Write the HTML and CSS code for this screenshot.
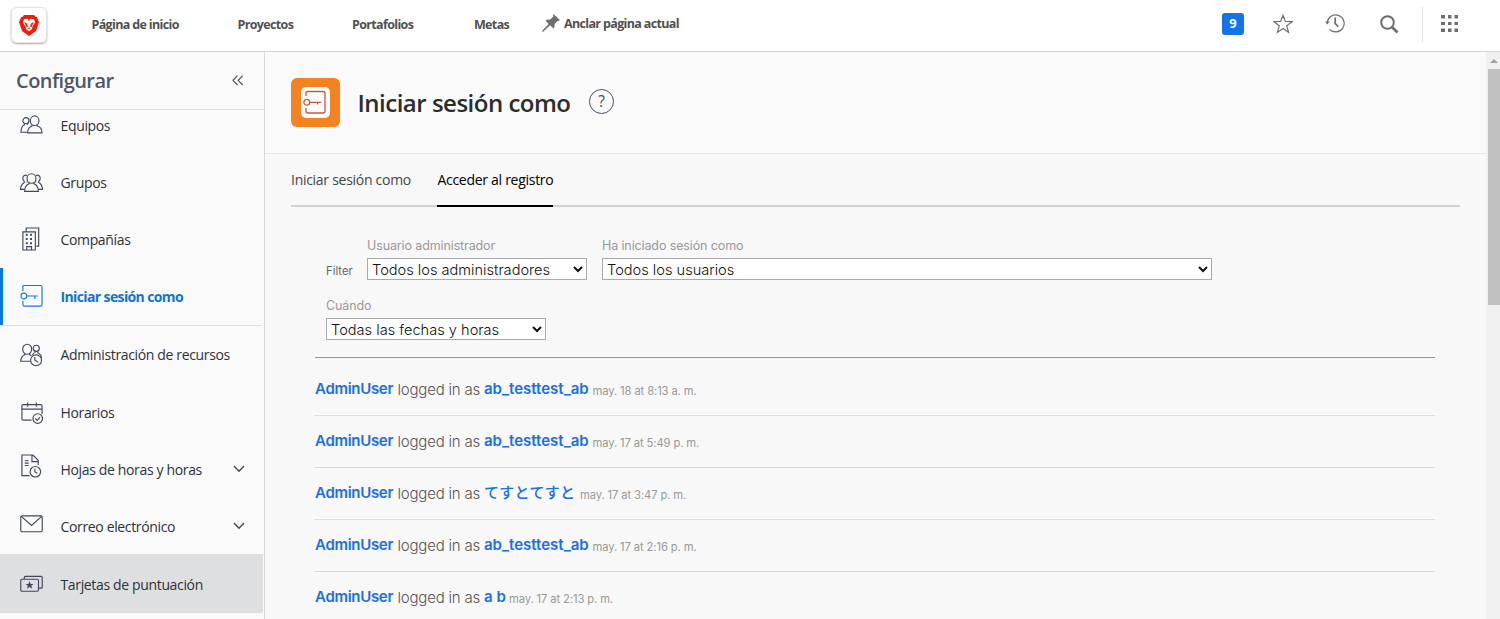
FILE: index.html
```html
<!DOCTYPE html>
<html lang="es">
<head>
<meta charset="utf-8">
<title>Iniciar sesión como</title>
<link rel="stylesheet" href="styles.css">
</head>
<body>
<header class="topbar">
  <div class="logo">
    <svg width="20" height="21" viewBox="0 0 20 21"><path fill="#f01d0c" d="M5 0h10l1.500 2 1.200-.3L20 7l-1 3-2 6-7 5-7-5-2-6-1-3L2.300 1.700 3.500 2z"/><path fill="#fff" d="M5 4.300l3-.6 2 .6 2-.6 3 .6 1 3-1.200 2.500-1.300 1.500-.5 2.700L10 16.300 7 14l-.5-2.700-1.300-1.500L4 7.300z"/><path fill="#f01d0c" d="M5.300 6.800l2.900 1.900.6 3-1 .8L6.500 10zM14.700 6.800l-2.900 1.900-.6 3 1 .8 1.300-2.500zM8.600 13.200l1.400-.6 1.400.6-1.400 1.100zM9 4h2l-1 2.500z"/></svg>
  </div>
  <nav class="nav">
    <a class="nav-home">Página de inicio</a>
    <a class="nav-projects">Proyectos</a>
    <a class="nav-portfolios">Portafolios</a>
    <a class="nav-goals">Metas</a>
    <a class="nav-pin"><svg width="18" height="18" viewBox="0 0 18 18" fill="#6e6e6e"><path d="M11.500 0L18 6.300l-1.700.7-.6-.3-3.300 3.500c.5 1.500.2 3-1 4.200L8 11.200 1.200 17.800H.2v-1L6.600 10 3.600 6.800c1.200-1.200 2.800-1.500 4.300-1L11.400 2.400l-.4-.8z"/></svg><span>Anclar página actual</span></a>
  </nav>
  <div class="tools">
    <span class="badge">9</span>
    <svg class="tool-star" width="20" height="20" viewBox="0 0 20 20" fill="none" stroke="#6e6e6e" stroke-width="1.200"><path d="M10 1.200l2.300 6.200 6.800.2-5.400 4.200 1.900 6.600-5.600-3.800-5.600 3.800 1.900-6.600L.9 7.600l6.800-.2z"/></svg>
    <svg class="tool-history" width="20" height="19" viewBox="0 0 20 19" fill="none" stroke="#6e6e6e" stroke-width="1.200"><path d="M2.200 8.500a8.500 8.500 0 1 1 2.300 6.800"/><path d="M10.200 3.500v6l3 3.200" stroke-width="1.800"/><path d="M0 7.500h4.700L2.300 10.500z" fill="#6e6e6e" stroke="none"/></svg>
    <svg class="tool-search" width="19" height="19" viewBox="0 0 19 19" fill="none" stroke="#6e6e6e"><circle cx="7.500" cy="7.500" r="6.300" stroke-width="2"/><path d="M12 12l5.500 5.500" stroke-width="2.600"/></svg>
    <i class="tool-divider"></i>
    <svg class="tool-apps" width="18" height="18" viewBox="0 0 18 18" fill="#6e6e6e"><path d="M0 1h4v3.500H0zM7 1h3.500v3.500H7zM13.500 1h3.500v3.500h-3.500zM0 8h4v3H0zM7 8h3.500v3H7zM13.500 8h3.500v3h-3.500zM0 14.500h4V18H0zM7 14.500h3.500V18H7zM13.500 14.500h3.500V18h-3.500z"/></svg>
  </div>
</header>
<div class="body">
  <aside class="sidebar">
    <div class="side-head"><h2>Configurar</h2><svg width="12" height="11" viewBox="0 0 12 11" fill="none" stroke="#4b5563" stroke-width="1.200"><path d="M5.500.6L1 5.300 5.500 10M10.700.6L6.200 5.300l4.500 4.700"/></svg></div>
    <div class="side-scroll">
      <ul class="side-list">
        <li class="item"><svg class="icon" viewBox="0 0 24 24"><circle cx="6.200" cy="6.500" r="3.200"/><ellipse cx="15.300" cy="6.500" rx="4.500" ry="5"/><path d="M4.500 9.500v1.500C2 12 1 14.500 1 18.500h7M7.800 9.500v1.200M12.500 10.500v1.500C9.500 13 8 15.500 8 19.200h15c0-3.700-1.500-6.200-5-7.200v-1.500"/></svg><span>Equipos</span></li>
        <li class="item"><svg class="icon" viewBox="0 0 24 24"><ellipse cx="12" cy="7.300" rx="4.700" ry="5"/><path d="M9.500 11.500v1.300c-3 1-4.500 3.800-4.700 8h14.400c-.2-4.200-1.700-7-4.700-8v-1.300M7.500 4.200C5 3 2.500 5 3 7.800c.2 1.200.7 2 1.500 2.500v1.200C1.800 13 .8 15 .5 18.600h4.600M16.500 4.200c2.500-1.200 5 .8 4.500 3.600-.2 1.200-.7 2-1.500 2.500v1.200c2.700 1.500 3.700 3.500 4 7.100h-4.600M7.500 10.500v1M16.500 10.500v1"/></svg><span>Grupos</span></li>
        <li class="item companies"><svg class="icon" viewBox="0 0 24 24"><path d="M6.500 4V.5h13v19H17M3 23.500v-19h13v19zM7 23v-3h5v3"/><path d="M6 7.500h2M10.500 7.500h2M6 12h2M10.500 12h2M6 16.500h2M10.500 16.500h2" stroke-width="2"/></svg><span>Compañías</span></li>
        <li class="item active"><svg class="icon" viewBox="0 0 24 24"><path d="M3 7V1.800Q3 1 4.200 1h17Q23 1 23 2.800v18q0 1.700-1.800 1.700h-17Q3 22.500 3 20.500V17"/><circle cx="4" cy="12" r="3"/><path d="M7 12h11.500M15.500 12v3"/></svg><span>Iniciar sesión como</span></li>
        <li class="item resources"><svg class="icon" viewBox="0 0 24 24"><ellipse cx="7.500" cy="6" rx="4.700" ry="5.200"/><circle cx="17" cy="5" r="3.200"/><path d="M5 10.500v1.200C2 12.700 1 15 .7 18.500H11M10 10.500v1.200l2 1M15.500 8v2M18.500 8v1.700c2.500 1 3.700 2.700 4 5.300M14.500 10L13 12"/><circle cx="16.800" cy="17.500" r="5.700"/><path d="M15.500 14v3.500l3.500 2"/></svg><span>Administración de recursos</span></li>
        <li class="item"><svg class="icon" viewBox="0 0 24 24"><path d="M12 19.500H3.200q-1.200 0-1.200-1.200V4.500q0-1.200 1.200-1.200h18.600q1.200 0 1.200 1.200V13M2 8h21M8 1v4.500M17 1v4.500"/><circle cx="18.500" cy="17.800" r="5"/><path d="M16 17.700l2 2 3-3.500"/></svg><span>Horarios</span></li>
        <li class="item hours"><svg class="icon" viewBox="0 0 24 24"><path d="M10 22H2V.5h11.500L19 6v5M12.500.7v6.800H19M5 6.500h4M5 9h4M5 11.500h4"/><circle cx="16" cy="18" r="5.500"/><path d="M15.500 14.500V18l2.500 1.500"/></svg><span>Hojas de horas y horas</span><svg class="chevron" viewBox="0 0 12 8"><path d="M1 1l5 5.300L11 1"/></svg></li>
        <li class="item mail"><svg class="icon" viewBox="0 0 24 24"><rect x=".8" y="1.500" width="22.400" height="16.500" rx="1.200"/><path d="M1.300 2l10.700 9.500L22.700 2"/></svg><span>Correo electrónico</span><svg class="chevron" viewBox="0 0 12 8"><path d="M1 1l5 5.300L11 1"/></svg></li>
        <li class="item hover"><svg class="icon" viewBox="0 0 24 24"><rect x=".8" y="6" width="18.500" height="12.500" rx="1.200"/><path d="M4.500 5.800V4q0-1 1-1h16.700q1 0 1 1V14.500q0 .8-.8.800h-3"/><path d="M10 8l1.200 3h3l-2.400 1.900.9 3.100-2.700-1.900L7.300 16l.9-3.100L5.800 11h3z" fill="#414958" stroke="none"/></svg><span>Tarjetas de puntuación</span></li>
      </ul>
    </div>
  </aside>
  <main class="main">
    <div class="page-head">
      <div class="page-icon"><svg width="29" height="31" viewBox="0 0 29 31"><rect width="29" height="31" rx="5" fill="#fff"/><g fill="none" stroke="#c9573a" stroke-width="1.300"><path d="M5 9V6q0-1.500 1.500-1.500h15.500q2 0 2 2v17.500q0 2-2 2H7q-2 0-2-2V21"/><circle cx="5.800" cy="15.300" r="2.900"/><path d="M8.700 15.300H20M16.500 15.300v2.200"/></g></svg></div>
      <h1>Iniciar sesión como</h1>
      <span class="help">?</span>
    </div>
    <div class="tabs"><a class="tab-login">Iniciar sesión como</a><a class="tab-log">Acceder al registro</a></div>
    <div class="filters">
      <div class="filter-row">
        <span class="filter-title">Filter</span>
        <label class="field narrow"><span>Usuario administrador</span><select><option>Todos los administradores</option></select></label>
        <label class="field wide"><span>Ha iniciado sesión como</span><select><option>Todos los usuarios</option></select></label>
      </div>
      <label class="field narrow"><span>Cuándo</span><select><option>Todas las fechas y horas</option></select></label>
    </div>
    <ul class="log">
      <li><b>AdminUser</b><span>logged in as</span><b class="target">ab_testtest_ab</b><time>may. 18 at 8:13 a. m.</time></li>
      <li><b>AdminUser</b><span>logged in as</span><b class="target">ab_testtest_ab</b><time>may. 17 at 5:49 p. m.</time></li>
      <li><b>AdminUser</b><span>logged in as</span><b class="target ja">てすとてすと</b><time>may. 17 at 3:47 p. m.</time></li>
      <li><b>AdminUser</b><span>logged in as</span><b class="target">ab_testtest_ab</b><time>may. 17 at 2:16 p. m.</time></li>
      <li><b>AdminUser</b><span>logged in as</span><b class="target short">a b</b><time>may. 17 at 2:13 p. m.</time></li>
    </ul>
  </main>
  <div class="scrollbar"><i class="arrow"></i><i class="thumb"></i></div>
</div>
</body>
</html>
```
FILE: styles.css
```css
* { box-sizing: border-box; }
html, body { margin: 0; height: 619px; overflow: hidden; }
body { font-family: "Open Sans", "Noto Sans", sans-serif; font-size: 14px; color: #2c2c2c; background: #fafafa; }
ul, h1, h2 { margin: 0; padding: 0; list-style: none; }
svg { display: block; flex: none; }
.topbar { height: 52px; display: flex; background: #fff; border-bottom: 1px solid #d3d3d3; }
.logo { width: 36px; height: 36px; margin: 7px 0 0 11.400px; border-radius: 6px; border: 1px solid #e4e4e4; box-shadow: 0 1px 2px rgba(0,0,0,.35); display: flex; justify-content: center; padding-top: 7px; }
.nav { display: flex; margin-left: 44.100px; font-size: 12.500px; letter-spacing: -.65px; font-weight: 700; color: #505050; line-height: 50px; white-space: nowrap; width: 1130.500px; }
.nav-home { width: 146px; }
.nav-projects { width: 114.500px; }
.nav-portfolios { width: 122px; }
.nav-goals { width: 68px; }
.nav-pin { display: flex; gap: 4px; line-height: 48px; }
.nav-pin svg { margin-top: 14px; }
.tools { display: flex; }
.badge { width: 22px; height: 22px; margin-top: 13px; background: #1473e6; color: #fff; border-radius: 3px; font-size: 13px; font-weight: 700; line-height: 21px; text-align: center; }
.tool-star { margin: 14px 0 0 29px; }
.tool-history { margin: 14px 0 0 32px; }
.tool-search { margin: 15px 0 0 35px; }
.tool-divider { width: 1px; height: 35px; background: #e4e4e4; margin: 7px 0 0 23px; }
.tool-apps { margin: 14px 0 0 18px; }
.body { display: flex; height: 567px; }
.sidebar { width: 265px; border-right: 1px solid #d9d9d9; display: flex; flex-direction: column; flex: none; }
.side-head { height: 58px; flex: none; border-bottom: 1px solid #e0e0e0; display: flex; align-items: center; padding: 0 20px 1px 16px; justify-content: space-between; }
.side-head h2 { font-size: 20px; letter-spacing: -.55px; font-weight: 600; color: #4f5763; }
.side-scroll { flex: 1; overflow: hidden; padding-right: 1px; }
.side-list { margin-top: -13px; }
.item { height: 57px; display: flex; align-items: center; padding: 0 18px 0 20px; color: #2d333b; white-space: nowrap; letter-spacing: -.35px; }
.icon { width: 23px; height: 24px; margin-right: 17.500px; fill: none; stroke: #414958; stroke-width: 1.200; }
.item span { flex: 1; padding-bottom: 1px; }
.chevron { width: 12px; height: 8px; fill: none; stroke: #414958; stroke-width: 1.400; margin-top: -2px; }
.companies .icon { margin-top: -2px; }
.active { height: 58px; border-bottom: 1px solid #e0e0e0; box-shadow: inset 3px 0 #0b78de; color: #0f73d8; font-weight: 700; letter-spacing: -.62px; }
.active .icon { stroke: #1478d8; margin-top: -1px; }
.resources { height: 58px; }
.hours .icon { margin-top: -7px; }
.mail { height: 56px; }
.mail span { padding: 1px 0 0; }
.mail .chevron { margin-top: -1px; }
.hover { height: 59px; background: #dedfe0; padding-top: 2px; }
.main { width: 1221px; background: #f8f8f8; }
.page-head { height: 102px; background: #fafafa; border-bottom: 1px solid #e7e7e7; padding: 26px 0 0 26px; display: flex; }
.page-icon { width: 49px; height: 49px; border-radius: 6px; background: #f58220; padding: 9px 10px; }
h1 { font-size: 24px; letter-spacing: -.5px; line-height: 50px; font-weight: 600; color: #2c2c2c; width: 213px; margin-left: 17.500px; white-space: nowrap; }
.help { width: 25px; height: 25px; margin: 10.500px 0 0 18.500px; border: 1.500px solid #4a5060; border-radius: 50%; font-size: 15.500px; line-height: 22px; text-align: center; color: #4a5060; }
.tabs { height: 53px; margin: 0 26px; border-bottom: 2px solid #d3d3d3; display: flex; line-height: 51px; white-space: nowrap; color: #464646; letter-spacing: -.28px; }
.tab-login { width: 120px; margin-right: 26.400px; }
.tab-log { width: 115.600px; height: 53px; border-bottom: 2px solid #000; color: #000; }
.filters { margin: 0 51px 0 50px; height: 151px; padding: 31px 0 0 11px; border-bottom: 1px solid #959595; font-family: Inter, sans-serif; }
.filter-row { display: flex; height: 60px; }
.filter-title { width: 41px; font-size: 11.300px; color: #666; line-height: 14px; padding-top: 26px; }
.field { display: block; color: #999; font-size: 12.500px; letter-spacing: -.12px; line-height: 15px; margin-right: 15px; }
.field span { display: block; height: 20px; white-space: nowrap; }
.field select { display: block; width: 100%; height: 22px; border: 1px solid #aaa; border-radius: 0; background: #fff; color: #111; font: 300 14.600px Inter, sans-serif; padding: 1px 2px 0 0; }
.narrow { width: 220px; }
.wide { width: 610px; }
.log { margin: 6px 51px 0 50px; font-family: Inter, "Noto Sans CJK JP", sans-serif; color: #555; font-size: 15px; }
.log li { height: 52px; border-bottom: 1px solid #dcdcdc; display: flex; line-height: 50px; white-space: nowrap; }
.log b { width: 82.500px; font-weight: 600; letter-spacing: -.3px; color: #1a6fe4; }
.log span { width: 86.500px; font-weight: 300; letter-spacing: -.2px; line-height: 52px; }
.log .target { width: 108.500px; letter-spacing: 0; }
.log .target.ja { width: 96px; font-weight: 500; letter-spacing: .3px; }
.log .target.short { width: 25px; }
.log time { font-size: 11.200px; letter-spacing: -.1px; color: #999; line-height: 54px; }
.scrollbar { width: 14px; background: #f0f0f0; padding-left: 2px; }
.arrow { display: block; border: 4px solid transparent; border-bottom: 4px solid #a3a3a3; border-top-width: 6px; width: 8px; height: 10px; margin: 1px 0 6px 2px; }
.thumb { display: block; height: 236px; background: #c1c1c1; }
```
